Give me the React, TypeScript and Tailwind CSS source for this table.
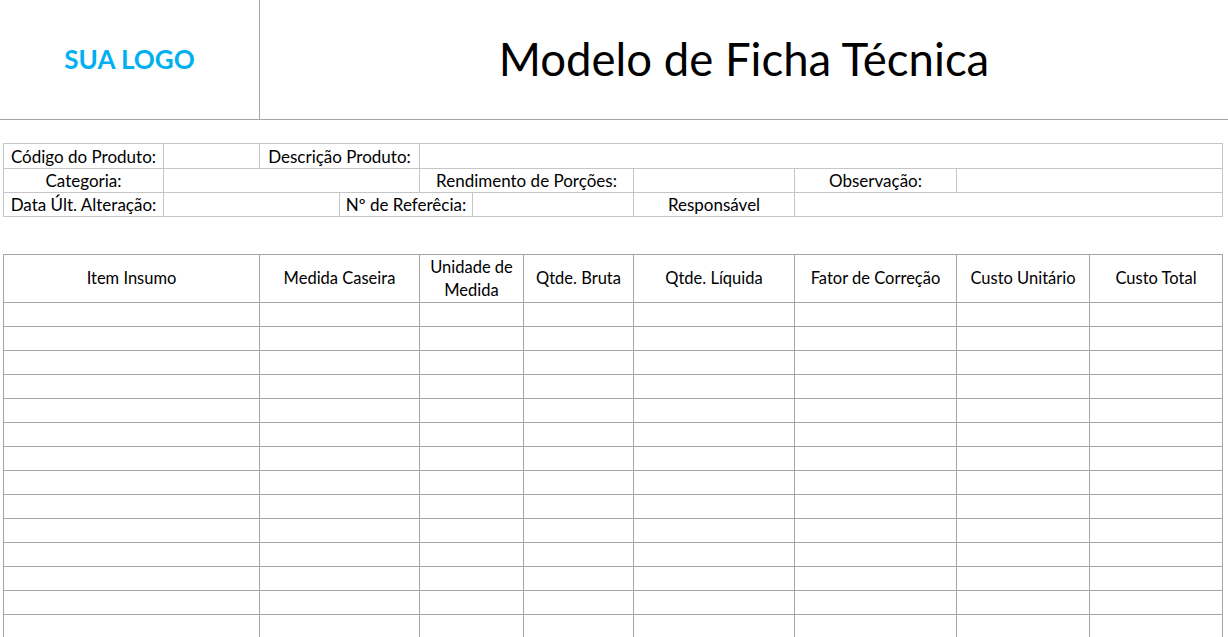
const infoRows = [
  [
    { text: 'Código do Produto:', span: 'col-span-1' },
    { text: '', span: 'col-span-1' },
    { text: 'Descrição Produto:', span: 'col-span-2' },
    { text: '', span: 'col-span-5' },
  ],
  [
    { text: 'Categoria:', span: 'col-span-1' },
    { text: '', span: 'col-span-3' },
    { text: 'Rendimento de Porções:', span: 'col-span-2' },
    { text: '', span: 'col-span-1' },
    { text: 'Observação:', span: 'col-span-1' },
    { text: '', span: 'col-span-1' },
  ],
  [
    { text: 'Data Últ. Alteração:', span: 'col-span-1' },
    { text: '', span: 'col-span-2' },
    { text: 'Nº de Referêcia:', span: 'col-span-2' },
    { text: '', span: 'col-span-1' },
    { text: 'Responsável', span: 'col-span-1' },
    { text: '', span: 'col-span-2' },
  ],
];

const headers = [
  'Item Insumo',
  'Medida Caseira',
  'Unidade de Medida',
  'Qtde. Bruta',
  'Qtde. Líquida',
  'Fator de Correção',
  'Custo Unitário',
  'Custo Total',
];

const App = () => {
  const rows = Array.from({ length: 15 });

  return (
    <div className="w-[1228px] bg-white text-black font-['Lato',sans-serif]">
      {/* Header */}
      <div className="flex h-[120px] border-b border-[#a6a6a6]">
        <div className="w-[260px] flex items-center justify-center border-r border-[#a6a6a6]">
          <span className="text-[26px] font-bold text-[#00b0f0]">SUA LOGO</span>
        </div>
        <div className="flex-1 flex items-center justify-center">
          <h1 className="text-[45.5px] leading-none pb-[2px]">Modelo de Ficha Técnica</h1>
        </div>
      </div>

      {/* Info table */}
      <div className="mt-[23px] ml-[3px] w-[1220px] grid grid-cols-[160px_96px_80px_80px_53px_161px_161px_162px_266px] border-r border-b border-[#c6c6c6] text-[17px] leading-none">
        {infoRows.map((row, r) =>
          row.map((cell, c) => (
            <div
              key={`${r}-${c}`}
              className={`${cell.span} ${r === 0 ? 'h-[25px]' : 'h-[24px]'} border-l border-t border-[#c6c6c6] flex items-center justify-center whitespace-nowrap`}
            >
              {cell.text}
            </div>
          ))
        )}
      </div>

      {/* Main table */}
      <div className="mt-[37px] ml-[3px] w-[1220px] grid grid-cols-[256px_160px_104px_110px_161px_162px_133px_133px] border-r border-[#a6a6a6] text-[16.5px]">
        {headers.map((h) => (
          <div
            key={h}
            className="h-[48px] border-l border-t border-[#a6a6a6] flex items-center justify-center text-center leading-[23px] px-2"
          >
            {h}
          </div>
        ))}
        {rows.map((_, r) =>
          headers.map((h) => (
            <div key={`${r}-${h}`} className="h-[24px] border-l border-t border-[#a6a6a6]" />
          ))
        )}
      </div>
    </div>
  );
};

export default App;
